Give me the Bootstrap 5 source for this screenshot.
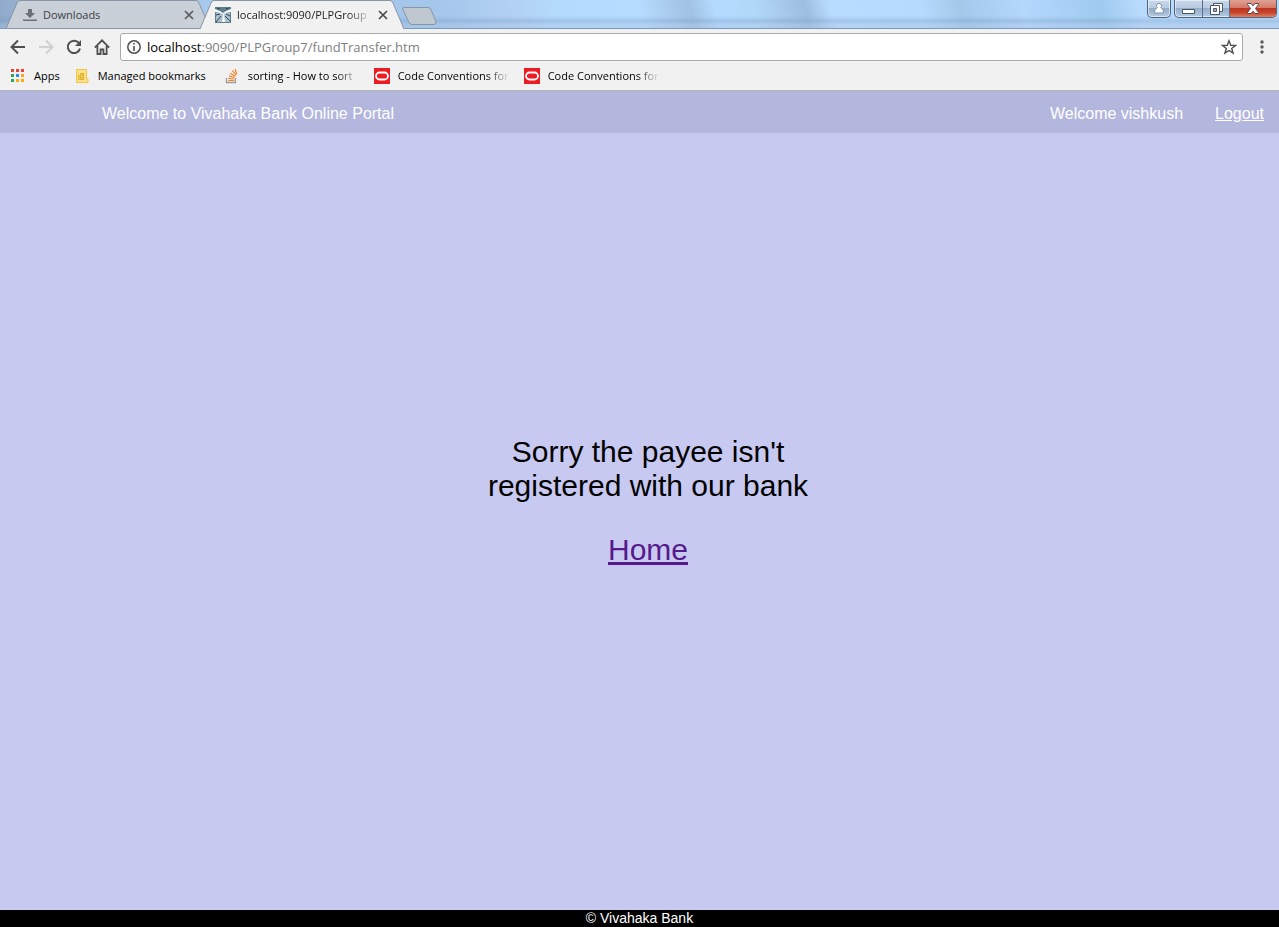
<!DOCTYPE html>
<html lang="en">
<head>
<meta charset="utf-8">
<meta name="viewport" content="width=device-width, initial-scale=1">
<title>Vivahaka Bank</title>
<link href="https://cdn.jsdelivr.net/npm/bootstrap@5.3.0/dist/css/bootstrap.min.css" rel="stylesheet">
<style>
  body { background: #c7c9f1; font-family: "Liberation Sans", Arial, sans-serif; }
  svg { display: block; flex: none; }
  .chrome { font: 11px/16px "Open Sans", "Noto Sans", sans-serif; background: #f1f1f1; border-bottom: 1px solid #b3b3b3; color: #000; }
  .chrome button { border: 0; padding: 0; background: none; color: #5a5a5a; flex: none; }
  .fade-text { white-space: nowrap; -webkit-mask-image: linear-gradient(to left, transparent, #000 24px); mask-image: linear-gradient(to left, transparent, #000 24px); }

  /* glass title bar */
  .tabstrip { height: 29px; padding-left: 6px; border-bottom: 1px solid #7b98bd;
    background:
      linear-gradient(to bottom, transparent 16px, rgba(120,155,195,.35) 21px, rgba(175,195,225,.35) 25px),
      linear-gradient(75deg, #8fa9c8 0, #a9cbef 8%, #a3c6ea 34%, #b2d0f3 40%, #b4dbfd 44%, #b6dcff 50%, #a0c2e2 54%, #b4daff 56%, #b2d8f8 59%, #9dbede 63%, #b8dcff 65%, #b5dafd 72%, #a3c8ea 75%, #b4d7fc 80%, #9fcbee 86%, #b8dafd 89%, #b9d9f7 100%); }
  .tab-item { width: 204px; height: 29px; padding: 1px 16px 0 17px; margin-right: -10px; gap: 6px; color: #3c4043; }
  .tab-item.is-front { z-index: 1; margin-right: 0; margin-bottom: -1px; color: #222; padding-left: 15px; }
  .tab-shape { position: absolute; inset: 0; }
  .new-tab { margin: 7px 0 0 -2px; height: 18px; }
  .win-buttons { gap: 3px; padding-right: 2px; }
  .win-group { height: 18px; border: 1px solid #4e6580; border-top: 0; border-radius: 0 0 5px 5px; overflow: hidden; box-shadow: inset 0 0 0 1px rgba(255,255,255,.55);
    background: linear-gradient(#c8d8ea 0, #b9cce2 45%, #94abc6 48%, #b4cbe4 100%); }
  .win-group button { display: grid; place-items: center; width: 27px; height: 17px; }
  .win-group .win-user { width: 22px; }
  .win-group button + button { border-left: 1px solid #5b7088; }
  .win-group .win-close { width: 47px; background: linear-gradient(#e0a193 0, #d47b69 45%, #bb3520 48%, #c9442b 75%, #df8465 100%); }

  /* toolbar */
  .toolbar { height: 36px; padding: 0 14px 0 10px; }
  .nav-icons { gap: 12px; width: 110px; }
  .omnibox { height: 28px; border: 1px solid #a9a9a9; border-radius: 3px; background: #fff; padding: 0 5px 0 6px; gap: 6px; }
  .omnibox label { color: #808080; font-size: 13px; }
  .url-field { position: relative; height: 20px; }
  .url-field input { position: absolute; inset: 0; width: 100%; border: 0; padding: 0; background: transparent; outline: 0; }
  .bookmarks { height: 25px; padding: 0 10px 4px; gap: 14px; }
  .bookmarks a { color: #000; text-decoration: none; height: 20px; }
  .bm-label { width: 112px; }

  /* bank page */
  .bank-bar { background: #b3b6dd; color: #fff; font-size: 16px; line-height: 18px; height: 42px; padding: 4px 15px 0 102px; }
  .bank-bar a { color: #fff; margin-left: 32px; }
  .bank-main { padding: 0 0 41px 17px; font-size: 30px; line-height: 34px; color: #000; }
  .notice { max-width: 336px; }
  .notice p { margin-bottom: 30px; }
  .notice a { color: #551a8b; }
  .bank-foot { background: #000; color: #fff; font-size: 14px; line-height: 17px; }
</style>
</head>
<body class="d-flex flex-column min-vh-100">

<header class="chrome">
  <div class="tabstrip d-flex align-items-start">
    <div class="tab-item position-relative d-flex align-items-center">
      <svg class="tab-shape" width="204" height="29" viewBox="0 0 204 29"><path d="M0 28.5 11 3Q12 .5 14 .5H190Q192 .5 193 3L204 28.5Z" fill="#c9d0d8" stroke="#8795a6"/></svg>
      <svg class="position-relative" width="14" height="14" viewBox="0 0 14 14" fill="#6c6f73"><path d="M5 1h4v4h3L7 10 2 5h3zM0 11.500h14V13H0z"/></svg>
      <span class="position-relative flex-grow-1">Downloads</span>
      <button class="position-relative" aria-label="Close Downloads"><svg width="10" height="10" viewBox="0 0 10 10" stroke="#5a5a5a" stroke-width="1.700"><path d="m1 1 8 8M9 1 1 9"/></svg></button>
    </div>
    <div class="tab-item is-front position-relative d-flex align-items-center">
      <svg class="tab-shape" width="204" height="29" viewBox="0 0 204 29"><path d="M0 29 11 3Q12 .5 14 .5H190Q192 .5 193 3L204 29" fill="#f1f1f1" stroke="#8795a6"/></svg>
      <svg class="position-relative" width="16" height="16" viewBox="0 0 16 16"><path fill="#5e7c8c" d="M0 0h16v16H0z"/><path fill="#a9bfca" d="M1 6h14v9H1z"/><path d="M0 2 5 4l3 2 3-2 5-2v3l-5 1-2 1 1 8H7l1-8-3-1-5-1z" fill="#f4f8fa"/><path d="m1 15 5-6M15 14l-5-5M2 1l3 1M11 2l3-1M1 8l4-1M11 7l4 2" stroke="#2c4656"/></svg>
      <span class="position-relative fade-text flex-grow-1">localhost:9090/PLPGroup</span>
      <button class="position-relative" aria-label="Close tab"><svg width="10" height="10" viewBox="0 0 10 10" stroke="#4a4a4a" stroke-width="1.700"><path d="m1 1 8 8M9 1 1 9"/></svg></button>
    </div>
    <button class="new-tab" aria-label="New tab"><svg width="35" height="18" viewBox="0 0 35 18"><path d="M2 .5H26q2 0 3 2L34 15q.5 2.500-2 2.500H10q-2 0-3-2L.8 2.500Q.3.500 2 .5Z" fill="#bfc8d1" stroke="#8696a8"/></svg></button>
    <div class="win-buttons d-flex ms-auto">
      <div class="win-group d-flex"><button class="win-user" aria-label="Profile"><svg width="10" height="11" viewBox="0 0 10 11"><path d="M5 .5a2.300 2.300 0 0 1 1.500 4.200C8 5.500 9.500 6.500 9.500 10H.5C.5 6.500 2 5.500 3.500 4.700A2.300 2.300 0 0 1 5 .5Z" fill="#fff" stroke="#8193a8"/></svg></button></div>
      <div class="win-group d-flex">
        <button aria-label="Minimize"><svg width="13" height="13" viewBox="0 0 13 13"><path d="M.5 7.500h12v4H.5z" fill="#fff" stroke="#4b5663"/></svg></button>
        <button aria-label="Restore"><svg width="13" height="12" viewBox="0 0 13 12" stroke="#4b5663"><path d="M3.500.5h9v8h-9z" fill="#fff"/><path d="M.5 2.500h9v9h-9z" fill="#fff"/><path d="M3.500 5.500h3v3h-3z" fill="#9bb0c8"/></svg></button>
        <button class="win-close" aria-label="Close window"><svg width="12" height="11" viewBox="0 0 12 11"><path d="M.5.500h3.500L6 2.800 8 .5h3.500v1L8.500 5.500l3 4v1H8L6 8.200l-2 2.300H.5v-1l3-4-3-4z" fill="#fff" stroke="#5b4348"/></svg></button>
      </div>
    </div>
  </div>

  <div class="toolbar d-flex align-items-center">
    <div class="nav-icons d-flex align-items-center">
      <button aria-label="Back"><svg width="16" height="16" viewBox="0 0 16 16" fill="none" stroke="#4f4f4f" stroke-width="2"><path d="M15 8H2M8 1.500 1.500 8 8 14.500"/></svg></button>
      <button aria-label="Forward"><svg width="16" height="16" viewBox="0 0 16 16" fill="none" stroke="#d0d0d0" stroke-width="2"><path d="M1 8h13M8 1.500 14.500 8 8 14.500"/></svg></button>
      <button aria-label="Reload"><svg width="16" height="16" viewBox="0 0 16 16"><path d="M13 4.200A6.200 6.200 0 1 0 14 9.500" fill="none" stroke="#4f4f4f" stroke-width="2"/><path d="M15 1v6H9z" fill="#4f4f4f"/></svg></button>
      <button aria-label="Home"><svg width="16" height="16" viewBox="0 0 16 16" fill="none" stroke="#4f4f4f" stroke-width="1.800"><path d="M.8 8.700 8 1.400l7.200 7.300M3.400 7v8H6.600v-4.500H9.400V15h3.200V7"/></svg></button>
    </div>
    <div class="omnibox d-flex align-items-center flex-grow-1">
      <svg width="14" height="14" viewBox="0 0 14 14"><circle cx="7" cy="7" r="6.200" fill="none" stroke="#4f4f4f" stroke-width="1.500"/><path d="M6.200 3h1.600v1.600H6.200zM6.200 6h1.600v5H6.200z" fill="#4f4f4f"/></svg>
      <div class="url-field flex-grow-1 d-flex align-items-center">
        <label for="url"><span class="text-black">localhost</span>:9090/PLPGroup7/fundTransfer.htm</label>
        <input id="url" type="text">
      </div>
      <button aria-label="Bookmark this page"><svg width="16" height="16" viewBox="0 0 16 16" fill="none" stroke="#4f4f4f" stroke-width="1.400"><path d="m8 1.800 1.700 4.500 4.800.2-3.800 3 1.400 4.700L8 11.500l-4.100 2.700 1.400-4.700-3.800-3 4.800-.2z"/></svg></button>
    </div>
    <button class="ms-3" aria-label="Menu"><svg width="6" height="16" viewBox="0 0 6 16" fill="#5a5a5a"><circle cx="3" cy="3" r="1.700"/><circle cx="3" cy="8" r="1.700"/><circle cx="3" cy="13" r="1.700"/></svg></button>
  </div>

  <nav class="bookmarks d-flex align-items-center" aria-label="Bookmarks">
    <a href="#" class="d-flex align-items-center gap-2"><svg width="16" height="16" viewBox="0 0 16 16"><path fill="#ea4335" d="M1 1h3v3H1zM6 1h3v3H6zM11 1h3v3h-3z"/><path fill="#34a353" d="M1 6h3v3H1zM1 11h3v3H1z"/><path fill="#2a8cf0" d="M6 6h3v3H6z"/><path fill="#fbab10" d="M11 6h3v3h-3zM6 11h3v3H6zM11 11h3v3h-3z"/></svg><span>Apps</span></a>
    <a href="#" class="d-flex align-items-center gap-2"><svg width="16" height="16" viewBox="0 0 16 16"><path d="M2.500 1.500h10v9.500h1.500v3.500H2.500z" fill="#fde08a" stroke="#f0c541"/><path d="M4 7h2V5h4v7H4z" fill="#e2b52f"/><path d="M5 8h1v1H5zM7 6h1v1H7zM7 8h1v1H7zM5 10h1v1H5zM7 10h1v1H7zM9 8h-.5v1H9z" fill="#fde08a"/></svg><span class="bm-label">Managed bookmarks</span></a>
    <a href="#" class="d-flex align-items-center gap-2"><svg width="16" height="16" viewBox="0 0 16 16" fill="none"><path d="M2.500 10v4.500h9V10" stroke="#9a9c9f" stroke-width="1.300"/><path d="M4.200 12.500h6M4.300 10.300l6 .7M4.900 7.800l5.800 1.700M6.200 5.200l5.200 3M8.300 2.700l4 4.500M11 1l1.800 5" stroke="#f4832a" stroke-width="1.200"/></svg><span class="bm-label fade-text">sorting - How to sort</span></a>
    <a href="#" class="d-flex align-items-center gap-2"><svg width="16" height="16" viewBox="0 0 16 16"><path fill="#ed1c24" d="M0 0h16v16H0z"/><rect x="2" y="4.500" width="12" height="7" rx="3.500" fill="none" stroke="#fff" stroke-width="1.800"/></svg><span class="bm-label fade-text">Code Conventions for</span></a>
    <a href="#" class="d-flex align-items-center gap-2"><svg width="16" height="16" viewBox="0 0 16 16"><path fill="#ed1c24" d="M0 0h16v16H0z"/><rect x="2" y="4.500" width="12" height="7" rx="3.500" fill="none" stroke="#fff" stroke-width="1.800"/></svg><span class="bm-label fade-text">Code Conventions for</span></a>
  </nav>
</header>

<div class="bank-bar d-flex align-items-center">
  <span>Welcome to Vivahaka Bank Online Portal</span>
  <span class="ms-auto">Welcome vishkush</span>
  <a href="#">Logout</a>
</div>

<main class="bank-main flex-grow-1 d-flex align-items-center justify-content-center">
  <div class="notice text-center">
    <p>Sorry the payee isn't registered with our bank</p>
    <a href="#">Home</a>
  </div>
</main>

<footer class="bank-foot text-center">© Vivahaka Bank</footer>

<script src="https://cdn.jsdelivr.net/npm/bootstrap@5.3.0/dist/js/bootstrap.bundle.min.js"></script>
</body>
</html>
